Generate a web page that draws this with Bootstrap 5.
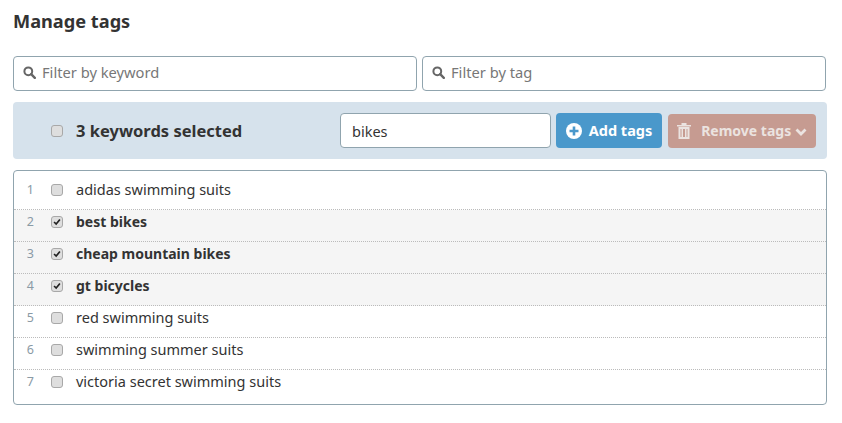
<!DOCTYPE html>
<html lang="en">
<head>
<meta charset="utf-8">
<title>Manage tags</title>
<link href="https://cdn.jsdelivr.net/npm/bootstrap@5.3.0/dist/css/bootstrap.min.css" rel="stylesheet">
<style>
body{font-family:"Noto Sans","Open Sans",sans-serif;font-size:14.5px;color:#333;background:#fff;}
.wrap{padding:9px 15px 0 13px;}
.page-title{font-size:18.200px;line-height:24px;font-weight:700;color:#333;margin:0 0 23px;}
.filter-row{gap:5px;margin-bottom:11px;}
.filter{height:35px;border:1px solid #90a4ae;border-radius:4px;padding:0 10px 2px 9px;gap:6px;color:#777;width:404px;background:#fff;}
.filter input{border:0;outline:0;padding:0;background:transparent;width:100%;font-size:14.700px;}
.filter input::placeholder{color:#777;opacity:1;}
.mag{flex:none;}
.tagbar{height:57px;width:814px;background:#d6e2ec;border-radius:4px;padding:0 11px 0 38px;margin-bottom:11px;}
.cbx{appearance:none;-webkit-appearance:none;width:12px;height:12px;border:1px solid #a8a8a8;border-radius:3px;background:#dedede;margin:0;flex:none;display:block;}
.cbx:checked{background:#dedede url("data:image/svg+xml,%3Csvg xmlns='http://www.w3.org/2000/svg' viewBox='0 0 12 12'%3E%3Cpath d='M2.500 6l2.500 2.500 4.500-5.500' fill='none' stroke='%23222' stroke-width='2'/%3E%3C/svg%3E") center/10px no-repeat;}
.sel-label{font-size:16.500px;font-weight:700;margin-left:13px;padding-top:1px;color:#333;}
.tag-input{width:211px;height:35px;border:1px solid #90a4ae;border-radius:4px;padding:0 11px;font-size:14.500px;color:#333;outline:0;}
.act{height:35px;border:0;border-radius:4px;color:#fff;font-weight:700;font-size:14.500px;padding:0;gap:7px;}
.act-add{width:106px;background:#4a98cb;margin-left:5px;}
.act-add:hover{background:#4a98cb;color:#fff;}
.act-rm{width:148px;height:34px;background:#c69b91;color:#ebe3e0;margin-left:6px;margin-top:1px;gap:10px;font-size:14px;padding-bottom:1px;}
.kw-list{width:814px;height:235px;border:1px solid #90a4ae;border-radius:4px;padding-top:7px;overflow:hidden;}
.kw{height:32px;border-bottom:1px dotted #bbb;padding-bottom:8px;}
.kw:last-child{border-bottom-color:transparent;}
.kw-on{background:#f5f5f5;font-weight:700;font-size:14px;}
.kw-num{width:20px;text-align:right;font-size:12.500px;font-weight:400;color:#8a9aa5;margin-right:17px;padding-top:1px;}
.kw-txt{margin-left:13px;}
</style>
</head>
<body>
<div class="wrap">
  <h1 class="page-title">Manage tags</h1>
  <div class="d-flex filter-row">
    <label class="filter d-flex align-items-center">
      <svg class="mag" width="13" height="13" viewBox="0 0 13 13"><circle cx="5.300" cy="5.300" r="3.900" fill="none" stroke="#666" stroke-width="2"/><path d="M8.200 8.200l3.600 3.600" stroke="#666" stroke-width="2.400" stroke-linecap="round"/></svg>
      <input type="text" placeholder="Filter by keyword">
    </label>
    <label class="filter d-flex align-items-center">
      <svg class="mag" width="13" height="13" viewBox="0 0 13 13"><circle cx="5.300" cy="5.300" r="3.900" fill="none" stroke="#666" stroke-width="2"/><path d="M8.200 8.200l3.600 3.600" stroke="#666" stroke-width="2.400" stroke-linecap="round"/></svg>
      <input type="text" placeholder="Filter by tag">
    </label>
  </div>
  <div class="tagbar d-flex align-items-center">
    <input class="cbx" type="checkbox" aria-label="Select all">
    <span class="sel-label">3 keywords selected</span>
    <input class="tag-input ms-auto" type="text" value="bikes">
    <button class="btn act act-add d-flex align-items-center justify-content-center" type="button">
      <svg width="16" height="16" viewBox="0 0 16 16"><circle cx="8" cy="8" r="8" fill="#fff"/><path d="M8 3.500v9M3.500 8h9" stroke="#4a98cb" stroke-width="2.600"/></svg>Add tags
    </button>
    <button class="btn act act-rm d-flex align-items-center justify-content-center" type="button">
      <svg width="14" height="16" viewBox="0 0 14 16" fill="#ebe3e0"><path d="M0 2h14v1.500H0zM4.500 0h5v2h-5z"/><path d="M1.500 4h11v12h-11zM3.500 6v8h1V6zm2.500 0v8h2V6zM9.500 6v8h1V6z" fill-rule="evenodd"/></svg>
      <span>Remove tags <svg width="12" height="8" viewBox="0 0 12 8"><path d="M1.500 1.500l4.500 4.500 4.500-4.500" fill="none" stroke="#ebe3e0" stroke-width="2.800"/></svg></span>
    </button>
  </div>
  <div class="kw-list">
    <div class="kw d-flex align-items-center"><span class="kw-num">1</span><input class="cbx" type="checkbox" aria-label="Select"><span class="kw-txt">adidas swimming suits</span></div>
    <div class="kw kw-on d-flex align-items-center"><span class="kw-num">2</span><input class="cbx" type="checkbox" checked aria-label="Select"><span class="kw-txt">best bikes</span></div>
    <div class="kw kw-on d-flex align-items-center"><span class="kw-num">3</span><input class="cbx" type="checkbox" checked aria-label="Select"><span class="kw-txt">cheap mountain bikes</span></div>
    <div class="kw kw-on d-flex align-items-center"><span class="kw-num">4</span><input class="cbx" type="checkbox" checked aria-label="Select"><span class="kw-txt">gt bicycles</span></div>
    <div class="kw d-flex align-items-center"><span class="kw-num">5</span><input class="cbx" type="checkbox" aria-label="Select"><span class="kw-txt">red swimming suits</span></div>
    <div class="kw d-flex align-items-center"><span class="kw-num">6</span><input class="cbx" type="checkbox" aria-label="Select"><span class="kw-txt">swimming summer suits</span></div>
    <div class="kw d-flex align-items-center"><span class="kw-num">7</span><input class="cbx" type="checkbox" aria-label="Select"><span class="kw-txt">victoria secret swimming suits</span></div>
  </div>
</div>
<script src="https://cdn.jsdelivr.net/npm/bootstrap@5.3.0/dist/js/bootstrap.bundle.min.js"></script>
</body>
</html>
